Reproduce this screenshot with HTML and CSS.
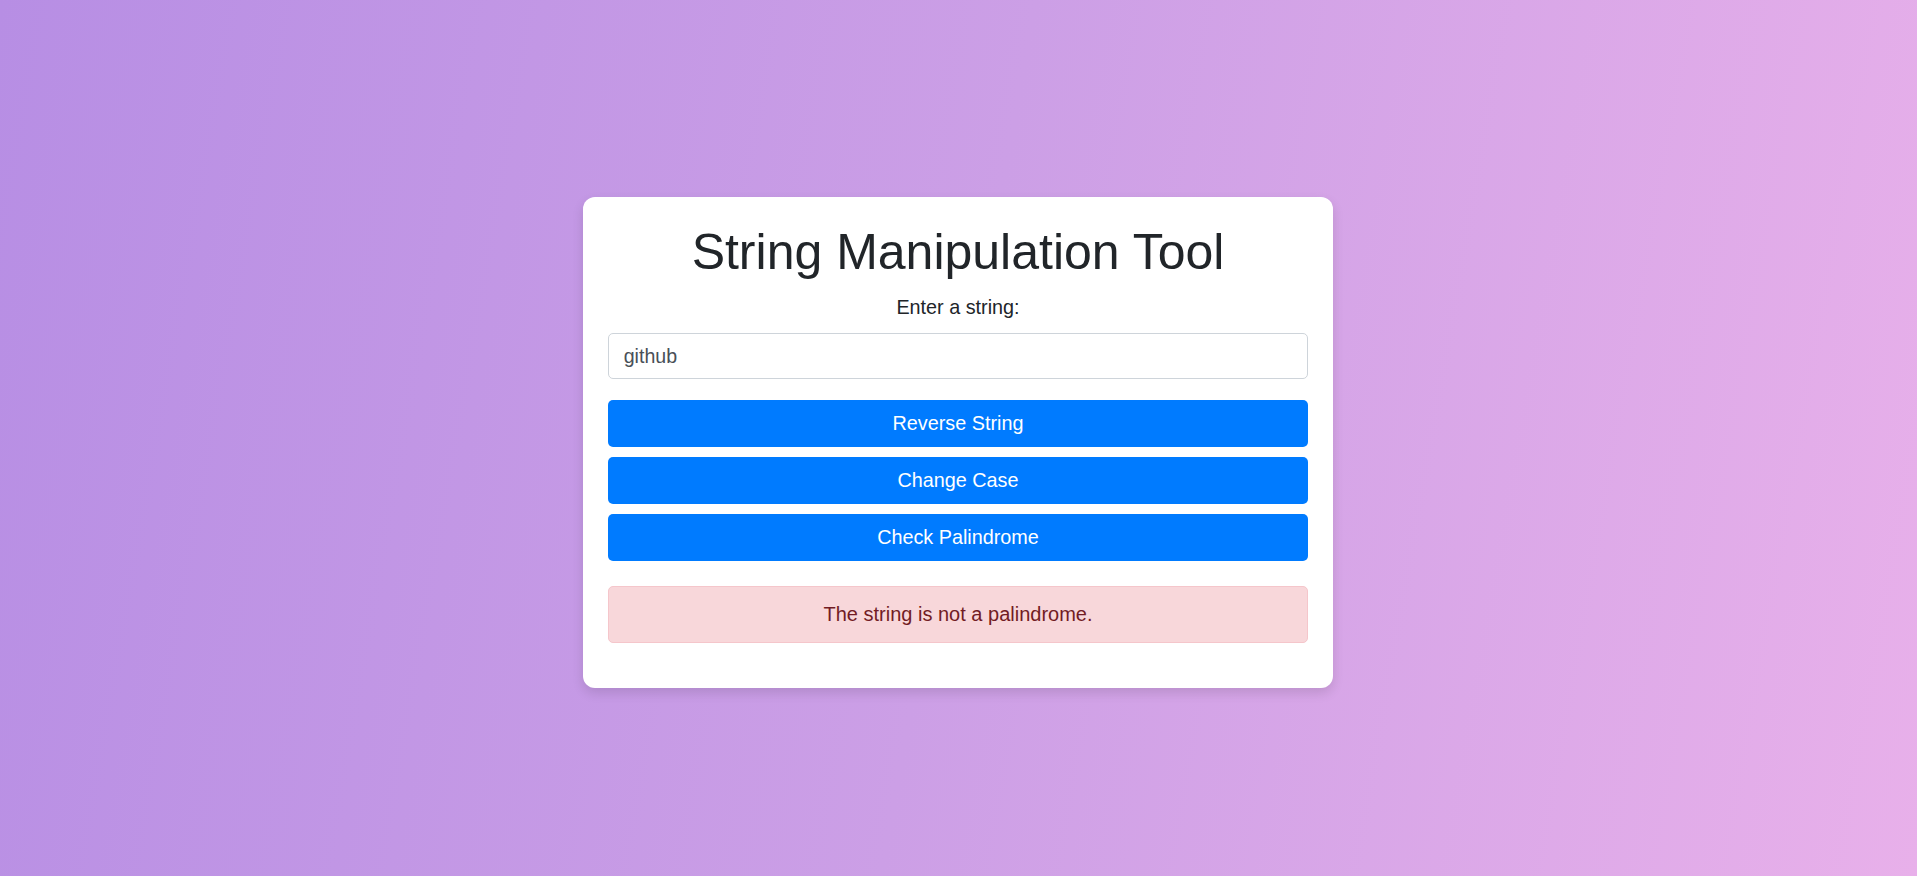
FILE: index.html
```html
<!DOCTYPE html>
<html lang="en">
<head>
<meta charset="utf-8">
<title>String Manipulation Tool</title>
<link rel="stylesheet" href="styles.css">
</head>
<body>
<main class="page">
  <section class="card">
    <h1 class="title">String Manipulation Tool</h1>
    <label class="label" for="str">Enter a string:</label>
    <input class="field" id="str" type="text" value="github">
    <div class="actions">
      <button class="btn" type="button">Reverse String</button>
      <button class="btn" type="button">Change Case</button>
      <button class="btn" type="button">Check Palindrome</button>
    </div>
    <div class="alert">The string is not a palindrome.</div>
  </section>
</main>
</body>
</html>
```

FILE: styles.css
```css
* { box-sizing: border-box; }

html, body {
  margin: 0;
  padding: 0;
  height: 100%;
}

body {
  font-family: "Liberation Sans", Arial, sans-serif;
  color: #212529;
  background: linear-gradient(100deg, #b78ee4 0%, #cc9fe6 50%, #e8b0ea 100%);
}

.page {
  height: 100vh;
  display: flex;
  align-items: center;
  justify-content: center;
  padding-top: 9px;
  padding-right: 1px;
}

.card {
  width: 750px;
  background: #ffffff;
  border-radius: 12px;
  padding: 25.5px 25px 45px;
  box-shadow: 0 5px 12px rgba(0, 0, 0, 0.12);
}

.title {
  margin: 0 0 12px;
  font-size: 50px;
  line-height: 58.8px;
  font-weight: 400;
  text-align: center;
  color: #212529;
}

.label {
  display: block;
  margin-bottom: 10px;
  font-size: 19.8px;
  line-height: 29.4px;
  text-align: center;
}

.field {
  display: block;
  width: 100%;
  height: 46.5px;
  padding: 0 14.7px;
  font-family: inherit;
  font-size: 19.6px;
  color: #495057;
  background: #ffffff;
  border: 1px solid #ced4da;
  border-radius: 5px;
  outline: none;
}

.actions {
  display: flex;
  flex-direction: column;
  gap: 10px;
  margin-top: 20.5px;
}

.btn {
  display: block;
  width: 100%;
  height: 47px;
  padding: 0;
  font-family: inherit;
  font-size: 19.8px;
  line-height: 29.4px;
  color: #ffffff;
  background: #007bff;
  border: none;
  border-radius: 5px;
  cursor: pointer;
}

.alert {
  margin-top: 25px;
  padding: 12.8px 25px;
  font-size: 20px;
  line-height: 29.4px;
  text-align: center;
  color: #721c24;
  background: #f8d7da;
  border: 1px solid #f5c6cb;
  border-radius: 5px;
}
```
